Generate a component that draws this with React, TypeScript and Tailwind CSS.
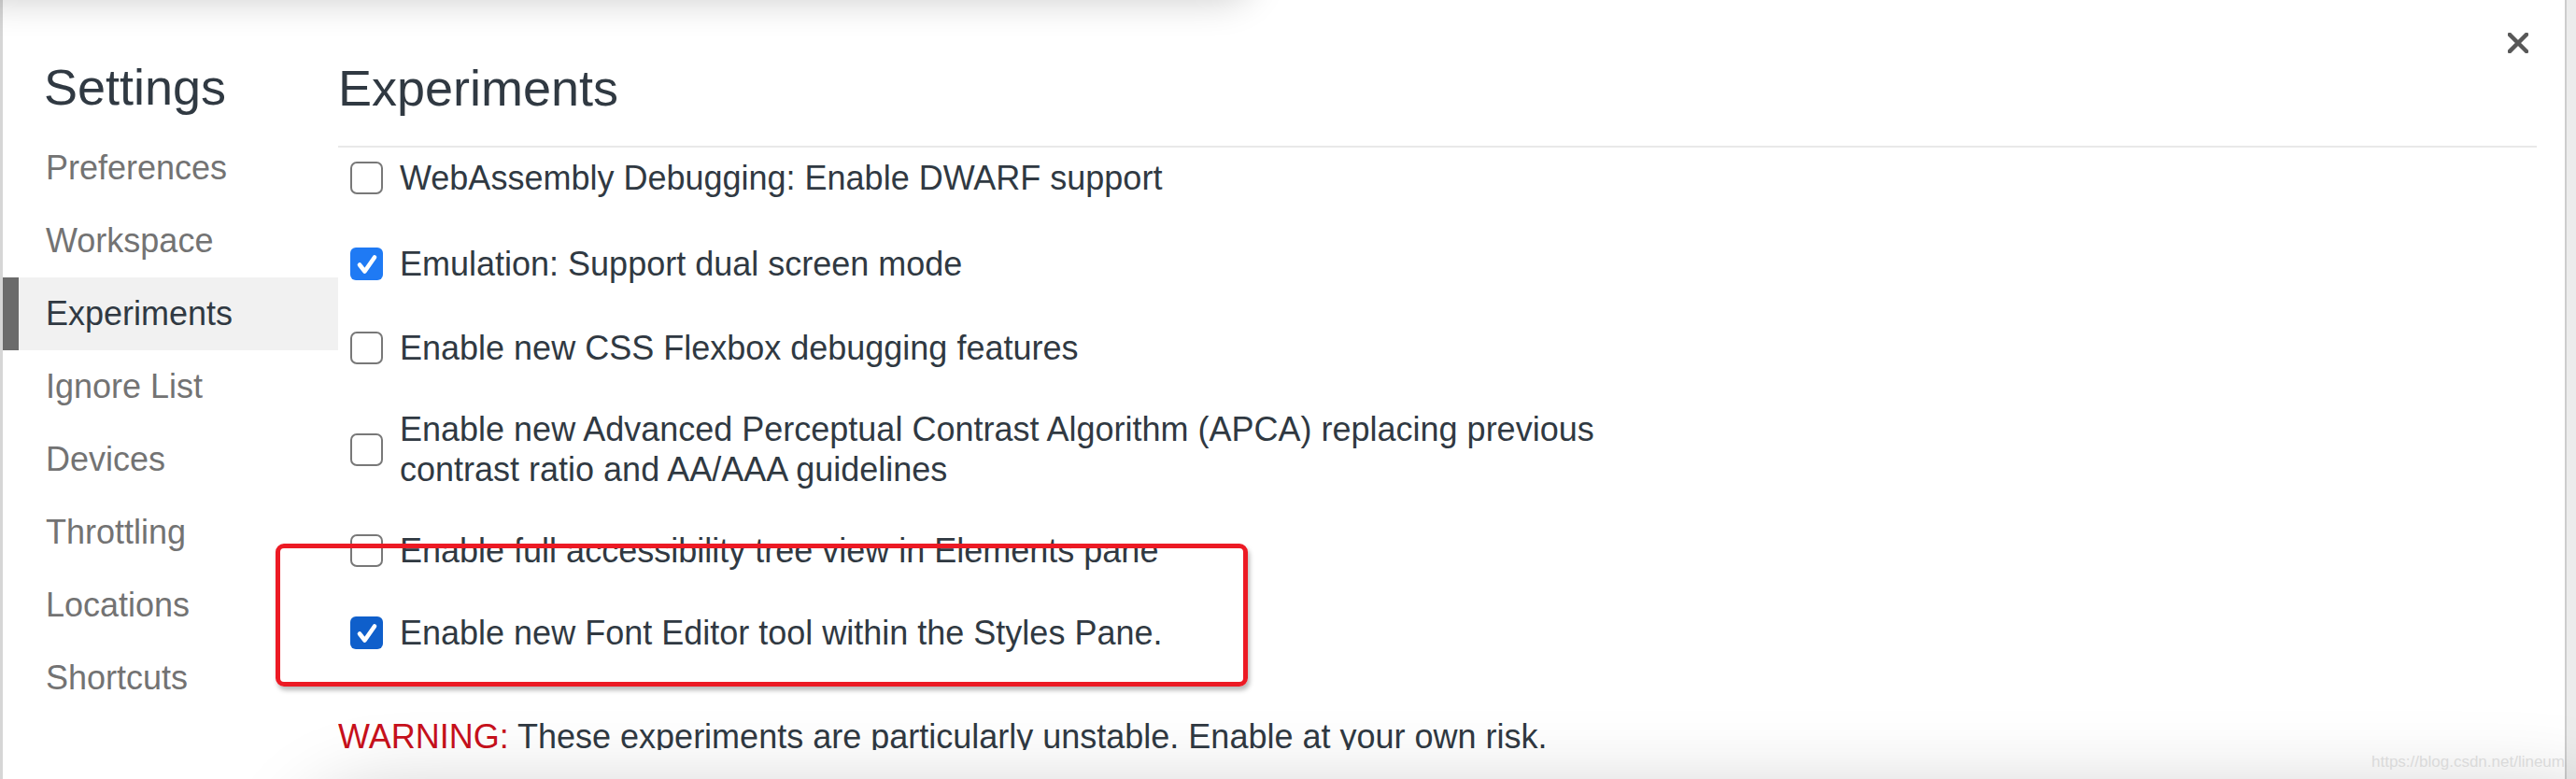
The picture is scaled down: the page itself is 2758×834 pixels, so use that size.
const navItems = [
  "Preferences",
  "Workspace",
  "Experiments",
  "Ignore List",
  "Devices",
  "Throttling",
  "Locations",
  "Shortcuts",
];

const experiments = [
  { label: "WebAssembly Debugging: Enable DWARF support", checked: false, tone: "", gap: "mt-0" },
  { label: "Emulation: Support dual screen mode", checked: true, tone: "bright", gap: "mt-[49px]" },
  { label: "Enable new CSS Flexbox debugging features", checked: false, tone: "", gap: "mt-[47px]" },
  {
    label:
      "Enable new Advanced Perceptual Contrast Algorithm (APCA) replacing previous contrast ratio and AA/AAA guidelines",
    checked: false,
    tone: "",
    gap: "mt-[44px]",
  },
  { label: "Enable full accessibility tree view in Elements pane", checked: false, tone: "", gap: "mt-[44px]" },
  { label: "Enable new Font Editor tool within the Styles Pane.", checked: true, tone: "dark", gap: "mt-[45px]" },
];

function Checkbox({ checked, tone }: { checked: boolean; tone: string }) {
  if (!checked) {
    return <div className="w-[35px] h-[35px] shrink-0 rounded-[7px] border-[2.5px] border-[#787878] bg-white" />;
  }
  return (
    <div
      className={`w-[35px] h-[35px] shrink-0 rounded-[6px] flex items-center justify-center ${
        tone === "dark" ? "bg-[#0f5fcb]" : "bg-[#1f7af4]"
      }`}
    >
      <svg width="28" height="28" viewBox="0 0 28 28">
        <path d="M6 14.5 L11.5 21.5 L22 6.5" fill="none" stroke="#fff" strokeWidth="4.6" strokeLinecap="round" strokeLinejoin="round" />
      </svg>
    </div>
  );
}

export default function App() {
  return (
    <div className="relative w-[2758px] h-[834px] overflow-hidden bg-white font-['Liberation_Sans',Arial,sans-serif] text-[#303942]">
      <div className="flex h-full border-l-[3px] border-[#d6d6d6]">
        {/* Sidebar */}
        <div className="w-[359px] shrink-0 pt-[61px]">
          <div className="h-[64px] leading-[64px] text-[54px] pl-[44px] text-[#303942]">Settings</div>
          <div className="mt-[16px] flex flex-col">
            {navItems.map((item) => {
              const active = item === "Experiments";
              return (
                <div
                  key={item}
                  className={`h-[78px] flex items-center text-[36px] ${
                    active ? "bg-[#f1f1f1] text-[#303942]" : "text-[#737373]"
                  }`}
                >
                  <div className={`w-[17px] h-full ${active ? "bg-[#6b6b6b]" : ""}`} />
                  <span className="pl-[29px]">{item}</span>
                </div>
              );
            })}
          </div>
        </div>

        {/* Main panel */}
        <div className="flex-1 h-[803px] overflow-hidden pt-[62px] pr-[30px]">
          <div className="h-[64px] leading-[64px] text-[54px]">Experiments</div>
          <div className="mt-[30px] h-[2px] bg-[#e9e9e9]" />
          <div className="pt-[11px] flex flex-col">
            {experiments.map((exp) => (
              <div key={exp.label} className={`flex items-center gap-[18px] pl-[13px] ${exp.gap}`}>
                <Checkbox checked={exp.checked} tone={exp.tone} />
                <span className="text-[36px] leading-[43px] max-w-[1350px]">{exp.label}</span>
              </div>
            ))}
          </div>
          <div className="mt-[68px] text-[36px] leading-[43px] whitespace-nowrap">
            <span className="text-[#c8111c]">WARNING:</span> These experiments are particularly unstable. Enable at your own risk.
          </div>
        </div>

        {/* Right edge strip */}
        <div className="w-[12px] shrink-0 h-full bg-[#ececec] border-l-2 border-[#cdcdcd]" />
      </div>

      {/* Shadow of window above */}
      <div className="absolute top-[-60px] left-[-40px] w-[1380px] h-[60px] rounded-[40px] bg-white shadow-[0_0_40px_rgba(0,0,0,0.2)]" />

      {/* Shadow of panel below */}
      <div className="absolute top-[852px] left-[320px] right-[-60px] h-[200px] rounded-[90px] bg-white shadow-[0_0_90px_rgba(0,0,0,0.22)]" />

      {/* Close button */}
      <svg className="absolute left-[2685px] top-[35px]" width="22" height="22" viewBox="0 0 22 22">
        <path d="M2 2 L20 20 M20 2 L2 20" stroke="#585858" strokeWidth="4.5" strokeLinecap="square" />
      </svg>

      {/* Annotation box */}
      <div className="absolute left-[295px] top-[582px] w-[1041px] h-[153px] rounded-[9px] border-[5px] border-[#ec1a24] shadow-[2px_4px_5px_rgba(0,0,0,0.28)]" />

      {/* Watermark */}
      <div className="absolute left-[2539px] top-[803px] w-[207px] overflow-hidden whitespace-nowrap text-[17px] text-[#dadada]">
        https://blog.csdn.net/lineuman
      </div>
    </div>
  );
}
